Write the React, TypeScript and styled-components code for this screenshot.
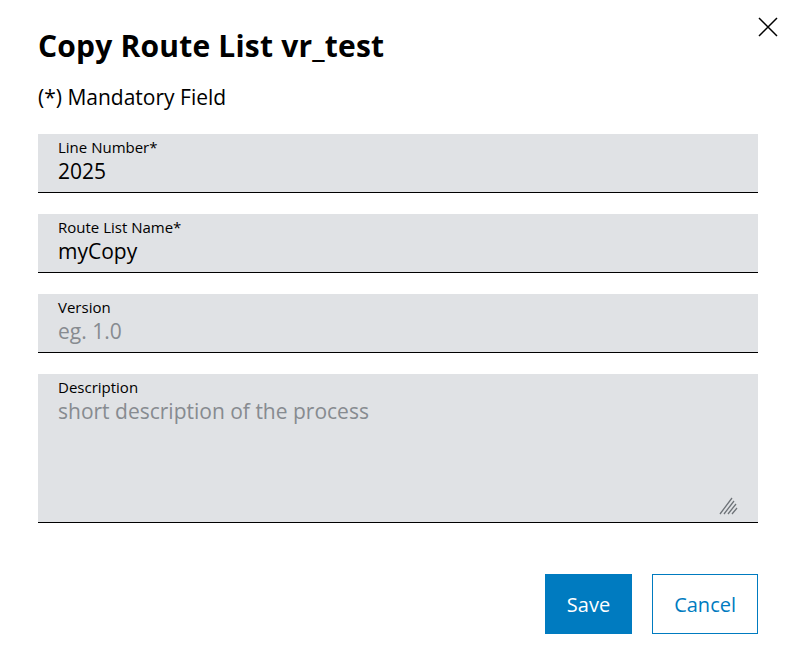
import React from "react";
import styled, { createGlobalStyle } from "styled-components";

const GlobalStyle = createGlobalStyle`
  html, body {
    margin: 0;
    padding: 0;
    background: #fff;
    font-family: "Open Sans", "Noto Sans", sans-serif;
    color: #000;
  }
  * {
    box-sizing: border-box;
  }
`;

const Dialog = styled.div`
  position: relative;
  width: 798px;
  height: 671px;
  padding: 27px 40px 0 38px;
`;

const CloseButton = styled.button`
  position: absolute;
  top: 14px;
  right: 17px;
  width: 26px;
  height: 26px;
  padding: 0;
  border: none;
  background: none;
  cursor: pointer;
  display: flex;
  align-items: center;
  justify-content: center;
`;

const Title = styled.h1`
  margin: 0;
  font-size: 30px;
  line-height: 38px;
  font-weight: 700;
  letter-spacing: 0.2px;
`;

const Hint = styled.p`
  margin: 18px 0 0;
  font-size: 21px;
  line-height: 28px;
`;

const Form = styled.form`
  margin-top: 23px;
  display: flex;
  flex-direction: column;
  gap: 21px;
`;

const Field = styled.label<{ $tall?: boolean }>`
  display: flex;
  flex-direction: column;
  height: ${props => (props.$tall ? "149px" : "59px")};
  padding: 3px 20px 0;
  background: #e0e2e5;
  border-bottom: 1px solid #000;
  position: relative;
`;

const Label = styled.span`
  font-size: 15px;
  line-height: 20px;
`;

const Input = styled.input`
  border: none;
  background: transparent;
  padding: 0;
  margin: 0;
  font-family: inherit;
  font-size: 21px;
  line-height: 28px;
  height: 28px;
  color: #000;
  outline: none;
  &::placeholder {
    color: #878b90;
  }
`;

const TextArea = styled.textarea`
  flex: 1;
  border: none;
  background: transparent;
  padding: 0;
  margin: 0;
  resize: none;
  font-family: inherit;
  font-size: 21px;
  line-height: 28px;
  color: #000;
  outline: none;
  &::placeholder {
    color: #878b90;
  }
`;

const Grip = styled.svg`
  position: absolute;
  right: 20px;
  bottom: 7px;
`;

const Actions = styled.div`
  margin-top: 51px;
  display: flex;
  justify-content: flex-end;
  gap: 20px;
`;

const Button = styled.button<{ $primary?: boolean }>`
  height: 60px;
  padding: 0 21px;
  font-family: inherit;
  font-size: 20px;
  cursor: pointer;
  border: 1px solid #007bc0;
  background: ${props => (props.$primary ? "#007bc0" : "#fff")};
  color: ${props => (props.$primary ? "#fff" : "#007bc0")};
`;

export default function App() {
  return (
    <>
      <GlobalStyle />
      <Dialog>
        <CloseButton aria-label="Close">
          <svg width="20" height="20" viewBox="0 0 20 20">
            <path d="M1 1 L19 19 M19 1 L1 19" stroke="#000" strokeWidth="1.5" fill="none" />
          </svg>
        </CloseButton>
        <Title>Copy Route List vr_test</Title>
        <Hint>(*) Mandatory Field</Hint>
        <Form>
          <Field>
            <Label>Line Number*</Label>
            <Input defaultValue="2025" />
          </Field>
          <Field>
            <Label>Route List Name*</Label>
            <Input defaultValue="myCopy" />
          </Field>
          <Field>
            <Label>Version</Label>
            <Input placeholder="eg. 1.0" />
          </Field>
          <Field $tall>
            <Label>Description</Label>
            <TextArea placeholder="short description of the process" />
            <Grip width="19" height="18" viewBox="0 0 19 18">
              <path
                d="M1 17 L13 1 M5 17 L15 4 M9 17 L17 7 M13 17 L18 11"
                stroke="#6e7378"
                strokeWidth="1.3"
                fill="none"
              />
            </Grip>
          </Field>
        </Form>
        <Actions>
          <Button type="button" $primary>Save</Button>
          <Button type="button">Cancel</Button>
        </Actions>
      </Dialog>
    </>
  );
}
